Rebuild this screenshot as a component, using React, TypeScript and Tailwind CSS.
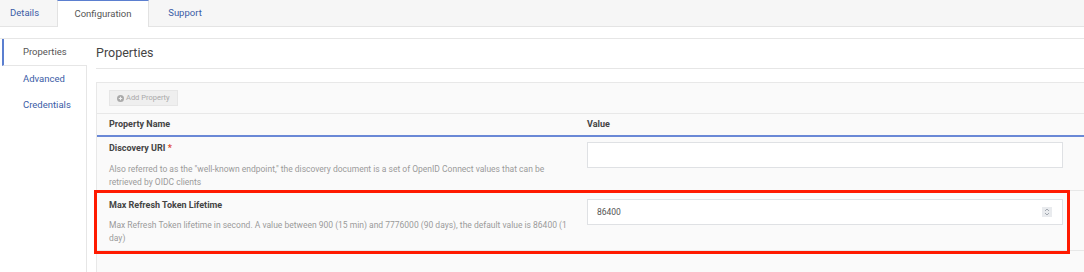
import { Fragment } from "react"

const sideItems = ["Advanced", "Credentials"]

interface PropRow {
  name: string
  required?: boolean
  desc: string
  value: string
  number?: boolean
  highlight?: boolean
}

const rows: PropRow[] = [
  {
    name: "Discovery URI",
    required: true,
    desc: "Also referred to as the \"well-known endpoint,\" the discovery document is a set of OpenID Connect values that can be retrieved by OIDC clients",
    value: "",
  },
  {
    name: "Max Refresh Token Lifetime",
    desc: "Max Refresh Token lifetime in second. A value between 900 (15 min) and 7776000 (90 days), the default value is 86400 (1 day)",
    value: "86400",
    number: true,
    highlight: true,
  },
]

function Spinner() {
  return (
    <span className="flex h-[10px] w-[10px] items-center justify-center bg-[#e9ebee]">
      <svg width="6" height="8" viewBox="0 0 6 8" fill="none" stroke="#9aa0a8" strokeWidth="0.9">
        <path d="M1 3 L3 1 L5 3" />
        <path d="M1 5 L3 7 L5 5" />
      </svg>
    </span>
  )
}

export default function App() {
  return (
    <div className="h-[272px] w-[1084px] overflow-hidden bg-white font-['Roboto',sans-serif]">
      {/* tabs */}
      <div className="flex h-[27px] items-stretch border-b border-[#e4e4e4] bg-[#f6f6f6] text-[9.5px]">
        <div className="flex w-[57px] items-center pl-[10px] text-[#3b5ca6]">Details</div>
        <div className="-mb-px flex w-[92px] items-center justify-center border-x border-t border-[#e2e2e2] border-t-[#5b7fd0] bg-white text-[#555]">
          Configuration
        </div>
        <div className="flex w-[72px] items-center justify-center text-[#3b5ca6]">Support</div>
      </div>

      <div className="mt-[11px] flex border-t border-[#e6e6e6]">
        {/* sidebar */}
        <aside className="flex w-[87px] shrink-0 flex-col text-[9.5px]">
          <div className="ml-[2px] flex h-[27px] items-center border-b border-l-[2px] border-[#e6e6e6] border-l-[#5b7fd0] pl-[19px] text-[#555]">
            Properties
          </div>
          <div className="flex h-[220px] flex-col border-r border-[#e6e6e6]">
            {sideItems.map((s) => (
              <div key={s} className="flex h-[26px] items-center pl-[23px] text-[#3b5ca6]">
                {s}
              </div>
            ))}
          </div>
        </aside>

        {/* content */}
        <main className="min-w-0 flex-1 overflow-hidden pl-[9px]">
          <div className="flex h-[30px] items-center border-b border-[#e6e6e6] text-[12.5px] text-[#444]">
            Properties
          </div>

          <div className="mt-[13px] w-[1000px] border border-[#e8e8e8] bg-[#fafafa]">
            <div className="flex h-[31px] items-center border-b border-[#e8e8e8] pl-[12px]">
              <button className="flex h-[16px] items-center gap-[2px] border border-[#e6e6e6] bg-[#efefef] px-[7px] text-[7.5px] text-[#a9a9a9]">
                <svg width="7" height="7" viewBox="0 0 10 10">
                  <circle cx="5" cy="5" r="5" fill="#a9a9a9" />
                  <path d="M5 2.5 V7.5 M2.5 5 H7.5" stroke="#efefef" strokeWidth="1.6" />
                </svg>
                Add Property
              </button>
            </div>

            <div className="flex h-[23px] items-center border-b-2 border-[#6a88d6] text-[9px] font-bold text-[#444]">
              <div className="w-[490px] pl-[12px]">Property Name</div>
              <div>Value</div>
            </div>

            {rows.map((r, i) => (
              <Fragment key={r.name}>
                <div
                  className={`relative flex border-b border-[#e8e8e8] ${
                    i === 0 ? "h-[54px] pt-[5px]" : "h-[60px] pt-[8px]"
                  }`}
                >
                  <div className="w-[490px] pl-[12px] pr-[20px]">
                    <div className="text-[9px] font-bold leading-[13px] text-[#444]">
                      {r.name}
                      {r.required && <span className="text-[#e0452c]"> *</span>}
                    </div>
                    <div className={`${i === 0 ? "mt-[8px]" : "mt-[7px]"} text-[8.5px] leading-[13px] text-[#9a9a9a]`}>
                      {r.desc}
                    </div>
                  </div>
                  <div className="flex h-[26px] w-[476px] items-center justify-between border border-[#dfe1e4] bg-white pl-[9px] pr-[10px] text-[8.5px] text-[#555]">
                    <span>{r.value}</span>
                    {r.number && <Spinner />}
                  </div>
                  {r.highlight && (
                    <div className="pointer-events-none absolute -left-[3px] -top-[1px] h-[64px] w-[976px] border-[3px] border-[#ff1a00]" />
                  )}
                </div>
              </Fragment>
            ))}
            <div className="h-[30px]" />
          </div>
        </main>
      </div>
    </div>
  )
}
